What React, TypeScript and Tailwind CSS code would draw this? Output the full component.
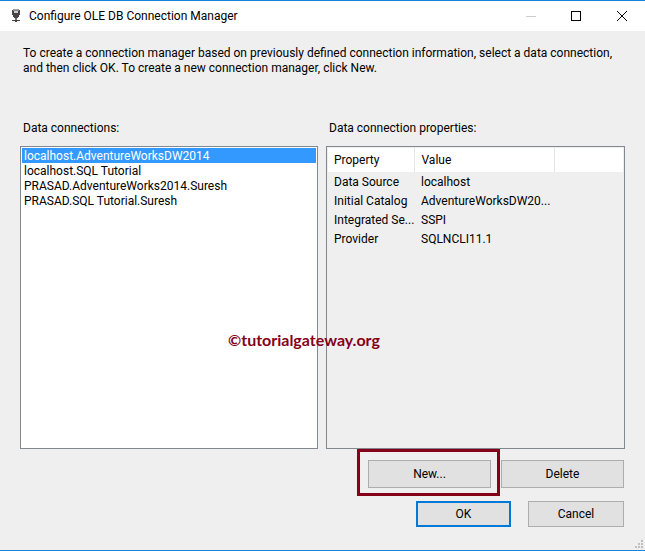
import { useState } from "react";

const connections = [
  "localhost.AdventureWorksDW2014",
  "localhost.SQL Tutorial",
  "PRASAD.AdventureWorks2014.Suresh",
  "PRASAD.SQL Tutorial.Suresh",
];

const properties = [
  { name: "Data Source", value: "localhost" },
  { name: "Initial Catalog", value: "AdventureWorksDW20..." },
  { name: "Integrated Se...", value: "SSPI" },
  { name: "Provider", value: "SQLNCLI11.1" },
];

function ServerIcon() {
  return (
    <svg width="10" height="14" viewBox="0 0 10 14" shapeRendering="crispEdges" aria-hidden="true">
      <path d="M1 1h8v5H8v2H7v1H3V8H2V6H1z" fill="#4a4446" />
      <path d="M2 0h6v1H2z" fill="#a5a2a3" />
      <path d="M2 1h6v1H2z" fill="#8d898b" />
      <path d="M3 2h4v2H3z" fill="#c9cccb" />
      <path d="M4 9h2v2H4z" fill="#6d686a" />
      <path d="M4 11h5v1H6v1H4v-1H1v-1z" fill="#4a4446" />
    </svg>
  );
}

function SizeGrip() {
  return (
    <svg width="8" height="8" viewBox="0 0 8 8" shapeRendering="crispEdges" aria-hidden="true">
      <path d="M6 0h2v2H6zM3 3h2v2H3zM6 3h2v2H6zM0 6h2v2H0zM3 6h2v2H3zM6 6h2v2H6z" fill="#bfbfbf" />
    </svg>
  );
}

export default function App() {
  const [selected, setSelected] = useState(0);

  return (
    <div className="relative flex min-h-screen flex-col border-y border-[#1883d7] bg-[#efefef] font-['Roboto','Open_Sans',sans-serif] text-[12px] leading-[15px] text-black">
      {/* Title bar */}
      <header className="flex h-[30px] items-center bg-white pl-[11px]">
        <ServerIcon />
        <h1 className="ml-2 flex-1 whitespace-nowrap">Configure OLE DB Connection Manager</h1>
        <button aria-label="Minimize" className="flex h-full w-[45px] items-center justify-center">
          <svg width="10" height="10" shapeRendering="crispEdges">
            <path d="M0 5h10v1H0z" fill="#cccccc" />
          </svg>
        </button>
        <button aria-label="Maximize" className="flex h-full w-[46px] items-center justify-center">
          <svg width="10" height="10" shapeRendering="crispEdges">
            <path d="M.5 .5h9v9h-9z" fill="none" stroke="#000" />
          </svg>
        </button>
        <button aria-label="Close" className="flex h-full w-[46px] items-center justify-center">
          <svg width="10" height="10">
            <path d="M0 0l10 10M10 0l-10 10" stroke="#000" />
          </svg>
        </button>
      </header>

      <main className="flex flex-1 flex-col pt-[15px] pr-5 pb-[23px] pl-5">
        <p className="px-[3px]">
          To create a connection manager based on previously defined connection information, select a data connection,
          and then click OK. To create a new connection manager, click New.
        </p>

        <div className="mt-[45px] grid flex-1 grid-cols-[298fr_299fr] gap-2">
          <section className="flex flex-col">
            <h2 id="connections" className="mb-[10px] px-[3px]">Data connections:</h2>
            <ul role="listbox" aria-labelledby="connections" className="flex-1 border border-[#828790] bg-white p-px">
              {connections.map((name, i) => (
                <li
                  key={name}
                  role="option"
                  aria-selected={i === selected}
                  onClick={() => setSelected(i)}
                  className={`px-[2px] pt-px leading-[14px] ${i === selected ? "bg-[#3399ff] text-white" : ""}`}
                >
                  {name}
                </li>
              ))}
            </ul>
          </section>

          <section className="flex flex-col">
            <h2 id="properties" className="mb-[10px] px-[3px]">Data connection properties:</h2>
            <div className="flex-1 border border-[#828790] p-px">
              <table aria-labelledby="properties" className="w-full table-fixed text-left whitespace-nowrap">
                <thead>
                  <tr className="h-6 bg-white">
                    <th className="w-[86px] border-r border-[#e5e5e5] pl-[6px] font-normal">Property</th>
                    <th className="w-[140px] border-r border-[#e5e5e5] pl-[7px] font-normal">Value</th>
                    <td />
                  </tr>
                </thead>
                <tbody>
                  {properties.map((row) => (
                    <tr key={row.name} className="h-[19px]">
                      <td className="pt-[2px] pl-[6px]">{row.name}</td>
                      <td className="pt-[2px] pl-[7px]">{row.value}</td>
                      <td />
                    </tr>
                  ))}
                </tbody>
              </table>
            </div>
          </section>
        </div>

        <div className="mt-[11px] flex justify-end gap-[10px] pr-px">
          <div className="relative">
            <button className="h-7 w-[123px] border border-[#adadad] bg-[#e1e1e1]">New...</button>
            {/* Highlight around the New button */}
            <div className="pointer-events-none absolute -top-[11px] -right-[9px] -bottom-2 -left-[11px] border-3 border-[#850019]" />
          </div>
          <button className="h-7 w-[123px] border border-[#adadad] bg-[#e1e1e1]">Delete</button>
        </div>
        <div className="mt-[13px] flex justify-end gap-[17px] pr-px">
          <button className="h-[26px] w-[95px] border-2 border-[#0078d7] bg-[#e1e1e1]">OK</button>
          <button className="h-[26px] w-24 border border-[#adadad] bg-[#e1e1e1]">Cancel</button>
        </div>
      </main>

      <div className="absolute right-[2px] bottom-[2px]">
        <SizeGrip />
      </div>
      <span className="pointer-events-none absolute top-[329px] left-[228px] font-['Lato','Open_Sans',sans-serif] text-[16px] leading-5 font-bold text-[#850019]">
        ©tutorialgateway.org
      </span>
    </div>
  );
}
